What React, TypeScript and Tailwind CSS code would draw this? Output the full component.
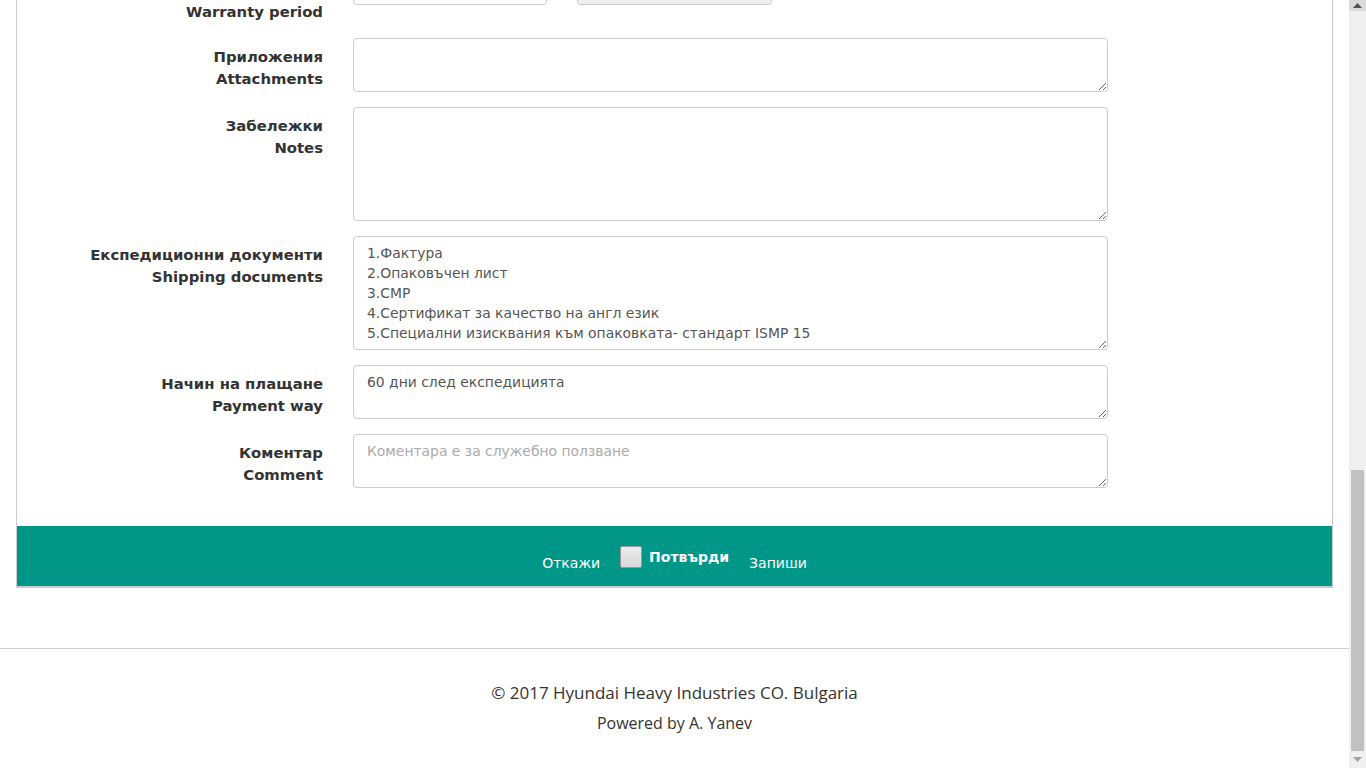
import React from 'react';

const label = "font-['DejaVu_Sans',Verdana,sans-serif] text-[14.85px] leading-[22px] font-bold text-[#333] text-right w-[306px] shrink-0 pt-[8px]";
const area = "w-[755px] shrink-0 rounded-[4px] border border-[#ccc] bg-white px-[13px] py-[6px] font-['DejaVu_Sans',Verdana,sans-serif] text-[13.9px] leading-[20px] text-[#555] resize-y placeholder:text-[#aaa] outline-none";

interface RowProps {
  bg: string;
  en: string;
  children: React.ReactNode;
}

function Row({ bg, en, children }: RowProps) {
  return (
    <div className="flex gap-[30px] mb-[15px]">
      <div className={label}>
        <div>{bg}</div>
        <div>{en}</div>
      </div>
      {children}
    </div>
  );
}

const shipping = `1.Фактура
2.Опаковъчен лист
3.CMP
4.Сертификат за качество на англ език
5.Специални изисквания към опаковката- стандарт ISMP 15`;

function Scrollbar() {
  return (
    <div className="w-[17px] h-[768px] shrink-0 bg-[#f0f0f0] flex flex-col">
      <div className="h-[11px] bg-[#dadada] flex items-center justify-center">
        <svg width="9" height="5" viewBox="0 0 9 5"><path d="M0 5 L4.5 0 L9 5 Z" fill="#505050" /></svg>
      </div>
      <div className="flex-1 flex flex-col justify-end px-[2px]">
        <div className="h-[281px] bg-[#c1c1c1]" />
      </div>
      <div className="h-[17px] flex items-center justify-center">
        <svg width="9" height="5" viewBox="0 0 9 5"><path d="M0 0 L4.5 5 L9 0 Z" fill="#a3a3a3" /></svg>
      </div>
    </div>
  );
}

export default function App() {
  return (
    <div className="flex w-[1366px] h-[768px] overflow-hidden bg-white">
      <div className="flex-1 flex flex-col">
        <div className="mt-[-29px] ml-[16px] w-[1317px] border-x border-b-2 border-[#ccc] bg-white">
          <div className="pb-[23px]">
            <Row bg="Гаранционен срок" en="Warranty period">
              <div className="flex gap-[30px] h-[34px]">
                <div className="w-[194px] rounded-[4px] border border-[#ccc] bg-white" />
                <div className="w-[195px] rounded-[4px] border border-[#ccc] bg-[#eee]" />
              </div>
            </Row>
            <Row bg="Приложения" en="Attachments">
              <textarea className={area + ' h-[54px]'} defaultValue="" />
            </Row>
            <Row bg="Забележки" en="Notes">
              <textarea className={area + ' h-[114px]'} defaultValue="" />
            </Row>
            <Row bg="Експедиционни документи" en="Shipping documents">
              <textarea className={area + ' h-[114px]'} defaultValue={shipping} />
            </Row>
            <Row bg="Начин на плащане" en="Payment way">
              <textarea className={area + ' h-[54px]'} defaultValue="60 дни след експедицията" />
            </Row>
            <Row bg="Коментар" en="Comment">
              <textarea className={area + ' h-[54px]'} placeholder="Коментара е за служебно ползване" />
            </Row>
          </div>
          <div className="h-[60px] bg-[#009688] flex items-center justify-center gap-[20px] pt-[2px] font-['DejaVu_Sans',Verdana,sans-serif] text-[14px] text-white">
            <span className="mt-[12px]">Откажи</span>
            <span className="flex items-center gap-[7px]">
              <span className="w-[22px] h-[22px] rounded-[2px] border border-[#9a9a9a] bg-gradient-to-b from-[#ececec] to-[#d8d8d8]" />
              <span className="font-bold">Потвърди</span>
            </span>
            <span className="mt-[12px]">Запиши</span>
          </div>
        </div>
        <div className="mt-[60px] border-t border-[#d0d0d0] pt-[31px] text-center text-[#333] font-['Open_Sans',sans-serif]">
          <div className="text-[17px] leading-[26px]">© 2017 Hyundai Heavy Industries CO. Bulgaria</div>
          <div className="text-[16px] leading-[22px] mt-[6px]">Powered by A. Yanev</div>
        </div>
      </div>
      <Scrollbar />
    </div>
  );
}
